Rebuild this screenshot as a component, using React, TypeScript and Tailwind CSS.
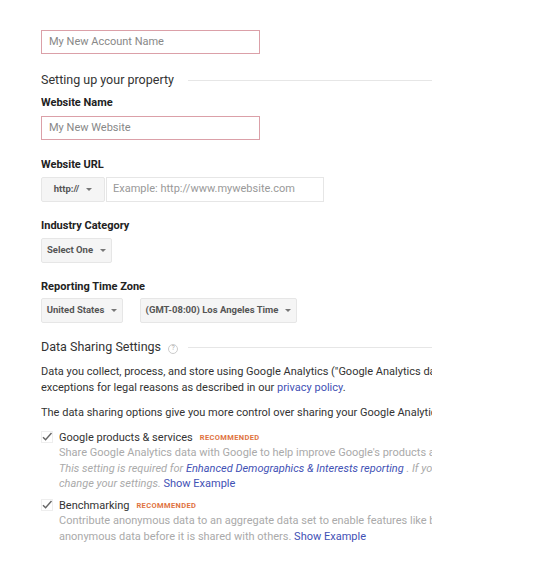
import React from "react";

function Caret() {
  return <span className="ml-[7px] inline-block h-0 w-0 border-x-[3px] border-t-[3.5px] border-x-transparent border-t-[#777]" />;
}

function DropButton({ label, width }: { label: string; width: string }) {
  return (
    <div
      className={`flex h-[25px] ${width} shrink-0 items-center justify-center whitespace-nowrap rounded-[2px] border border-[#e6e6e6] bg-[#f5f5f5] text-[9.5px] font-bold text-[#555]`}
    >
      {label}
      <Caret />
    </div>
  );
}

function Label({ children }: { children: React.ReactNode }) {
  return <div className="text-[11px] font-bold leading-[14px] text-[#222]">{children}</div>;
}

function SectionTitle({ title, help }: { title: string; help?: boolean }) {
  return (
    <div className="flex items-center">
      <span className="text-[12.5px] leading-[16px] text-[#333]">{title}</span>
      {help && (
        <span className="ml-[7px] mt-[3px] flex h-[10px] w-[10px] items-center justify-center rounded-full border border-[#ccc] text-[7px] leading-none text-[#aaa]">
          ?
        </span>
      )}
      <div className="ml-auto h-px w-[244px] bg-[#e6e6e6]" />
    </div>
  );
}

function Check() {
  return (
    <svg width="12" height="12" viewBox="0 0 12 12" className="mt-[1px] shrink-0">
      <rect x="0.5" y="0.5" width="11" height="11" fill="white" stroke="#eeeeee" />
      <path d="M2 6.2 L4.6 8.8 L10.5 2" fill="none" stroke="#666" strokeWidth="1.4" />
    </svg>
  );
}

function Recommended() {
  return <span className="ml-[7px] text-[7.5px] font-bold tracking-[0.05em] text-[#e0733f]">RECOMMENDED</span>;
}

export default function App() {
  return (
    <div className="min-h-[570px] bg-white" style={{ fontFamily: "Roboto, 'Liberation Sans', sans-serif" }}>
      <div className="ml-[41px] w-[391px] overflow-hidden pt-[30px]">
        <div className="flex h-[24px] w-[219px] items-center border border-[#dba0a8] px-[7px] text-[11px] text-[#888]">
          My New Account Name
        </div>

        <div className="mt-[18px]">
          <SectionTitle title="Setting up your property" />
        </div>

        <div className="mt-[8px]">
          <Label>Website Name</Label>
        </div>
        <div className="mt-[6px] flex h-[24px] w-[219px] items-center border border-[#dba0a8] px-[7px] text-[11px] text-[#888]">
          My New Website
        </div>

        <div className="mt-[18px]">
          <Label>Website URL</Label>
        </div>
        <div className="mt-[5px] flex">
          <DropButton label="http://" width="w-[64px]" />
          <div className="ml-px flex h-[25px] w-[218px] items-center border border-[#e6e6e6] px-[6px] text-[11px] text-[#999]">
            Example: http://www.mywebsite.com
          </div>
        </div>

        <div className="mt-[17px]">
          <Label>Industry Category</Label>
        </div>
        <div className="mt-[5px] flex">
          <DropButton label="Select One" width="w-[71px]" />
        </div>

        <div className="mt-[17px]">
          <Label>Reporting Time Zone</Label>
        </div>
        <div className="mt-[4px] flex gap-[17px]">
          <DropButton label="United States" width="w-[82px]" />
          <DropButton label="(GMT-08:00) Los Angeles Time" width="w-[157px]" />
        </div>

        <div className="mt-[16px]">
          <SectionTitle title="Data Sharing Settings" help />
        </div>

        <div className="mt-[9px] whitespace-nowrap text-[11px] leading-[15.5px] text-[#333]">
          <div>
            Data you collect, process, and store using Google Analytics ("Google Analytics data") is secure and kept
            confidential. This data is used to maintain and protect the Google Analytics service, to perform system
            critical operations, and in rare
          </div>
          <div>
            exceptions for legal reasons as described in our <span className="text-[#3f51b5]">privacy policy</span>.
          </div>
          <div className="mt-[10px]">
            The data sharing options give you more control over sharing your Google Analytics data.
          </div>

          <div className="mt-[9px] flex gap-[6px]">
            <Check />
            <div>
              <div className="flex items-center text-[11px] text-[#333]">
                Google products &amp; services
                <Recommended />
              </div>
              <div className="text-[#aaa]">
                Share Google Analytics data with Google to help improve Google's products and services.
              </div>
              <div className="italic text-[#aaa]">
                This setting is required for{" "}
                <span className="text-[#3f51b5]">Enhanced Demographics &amp; Interests reporting</span> . If you
                disable this option, you can still
              </div>
              <div className="text-[#aaa]">
                <span className="italic">change your settings.</span>{" "}
                <span className="not-italic text-[#3f51b5]">Show Example</span>
              </div>
            </div>
          </div>

          <div className="mt-[6px] flex gap-[6px]">
            <Check />
            <div>
              <div className="flex items-center text-[11px] text-[#333]">
                Benchmarking
                <Recommended />
              </div>
              <div className="text-[#aaa]">
                Contribute anonymous data to an aggregate data set to enable features like benchmarking and publications
              </div>
              <div className="text-[#aaa]">
                anonymous data before it is shared with others. <span className="text-[#3f51b5]">Show Example</span>
              </div>
            </div>
          </div>
        </div>
      </div>
    </div>
  );
}
